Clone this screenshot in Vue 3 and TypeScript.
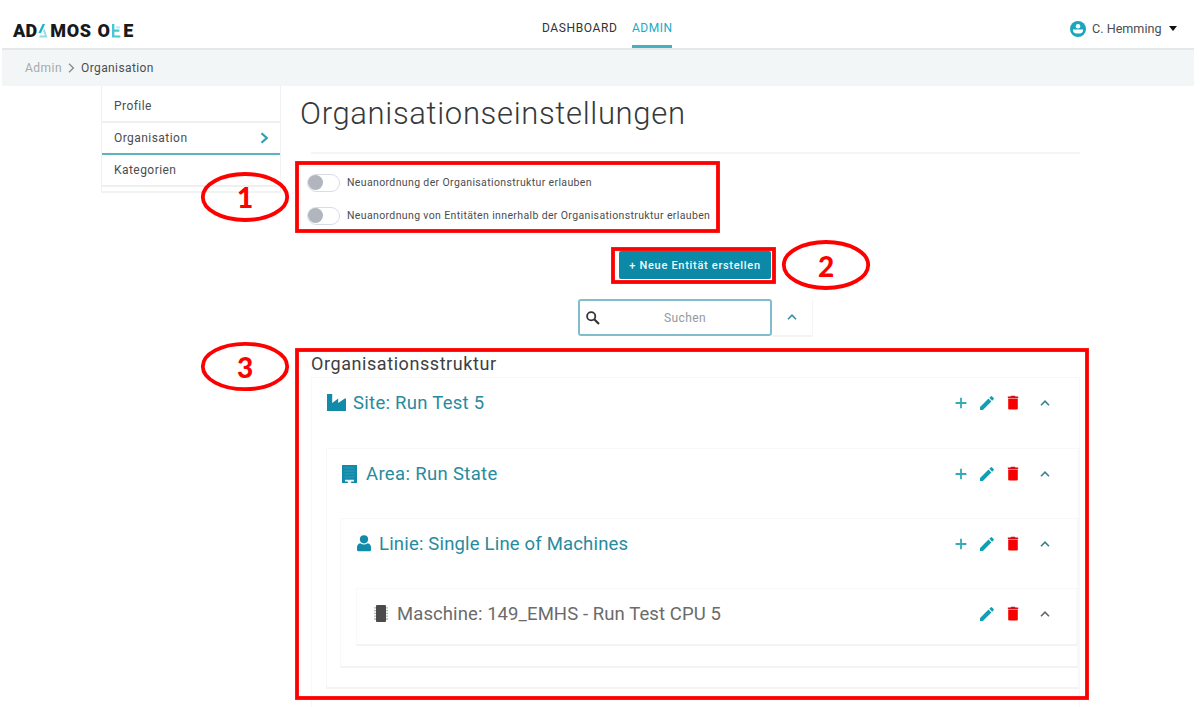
<script setup lang="ts">
interface Toggle { id: string; label: string }
const toggles: Toggle[] = [
  { id: 't1', label: 'Neuanordnung der Organisationstruktur erlauben' },
  { id: 't2', label: 'Neuanordnung von Entitäten innerhalb der Organisationstruktur erlauben' },
]
</script>

<template>
  <div class="page">
    <svg class="defs" width="0" height="0">
      <symbol id="plus" viewBox="0 0 12 12"><path d="M6 .8v10.4M.6 6h10.8" fill="none" stroke="#35a9b8" stroke-width="1.8" /></symbol>
      <symbol id="pencil" viewBox="0 0 14 14"><path d="M0 14v-2.9L8.5 2.6l2.9 2.9L2.9 14zM9.3 1.8L10.7.4q.7-.7 1.4 0l1.5 1.5q.7.7 0 1.4l-1.4 1.4z" fill="#139fb2" /></symbol>
      <symbol id="trash" viewBox="0 0 12 15"><path d="M1.2 3.6h9.6v9.6q0 1.3-1.3 1.3h-7q-1.3 0-1.3-1.3z" fill="#f60000" /><path d="M.8 3.1V1.5h2.6L4.2.7h3.6l.8.8h2.6v1.6z" fill="#d90c18" /></symbol>
      <symbol id="up" viewBox="0 0 10 6"><path d="M1 5.2l4-4 4 4" fill="none" stroke="currentColor" stroke-width="1.6" /></symbol>
    </svg>

    <header class="top">
      <div class="logo">
        <span class="lg">AD</span>
        <svg class="lg-a" width="10" height="14" viewBox="0 0 10 14"><path d="M4.6 0H7L3 9H.4z" fill="#19b4c5" /><path d="M6.4 4.5L9.3 13.4H1l.8-1.8h5.1L5.2 7z" fill="#8fdce4" /></svg>
        <span class="lg mos">MOS</span>
        <span class="lg o">O</span>
        <svg class="lg-e" width="9" height="14" viewBox="0 0 9 14"><path d="M0 0h2.4v5.6h5v2.2h-5v3.6h6v2.2H0z" fill="#4ac5d2" /><path d="M4 2.4h4v2H4z" fill="#b5e9ee" /></svg>
        <span class="lg">E</span>
      </div>
      <nav class="nav">
        <a class="dash">DASHBOARD</a>
        <a class="adm">ADMIN</a>
      </nav>
      <div class="user">
        <svg width="16" height="16" viewBox="0 0 16 16"><circle cx="8" cy="8" r="8" fill="#1aa7bd" /><circle cx="8" cy="5.2" r="2.3" fill="#fff" /><path d="M3 8.6h10v1.2q0 2.8-5 2.8t-5-2.8z" fill="#fff" /></svg>
        <span>C. Hemming</span>
        <i class="caret"></i>
      </div>
    </header>

    <div class="crumbs">
      <span class="c1">Admin</span>
      <svg width="7" height="10" viewBox="0 0 7 10"><path d="M1 .8L5.4 5 1 9.2" fill="none" stroke="#8a8e90" stroke-width="1.4" /></svg>
      <span class="c2">Organisation</span>
    </div>

    <div class="body">
      <aside class="side">
        <div class="item profile">Profile</div>
        <div class="item active"><span>Organisation</span>
          <svg width="9" height="12" viewBox="0 0 9 12"><path d="M1.5 1.2L6.8 6l-5.3 4.8" fill="none" stroke="#2d9fb1" stroke-width="2.2" /></svg>
        </div>
        <div class="item kat">Kategorien</div>
      </aside>

      <main class="main">
        <h1>Organisationseinstellungen</h1>
        <div class="rule"></div>
        <div class="toggles">
          <div v-for="t in toggles" :key="t.id" class="toggle">
            <i class="sw"><b></b></i><span>{{ t.label }}</span>
          </div>
        </div>
        <button class="create">+ Neue Entität erstellen</button>
        <div class="search">
          <div class="field">
            <svg width="14" height="14" viewBox="0 0 14 14"><circle cx="5.2" cy="5.2" r="4.1" fill="none" stroke="#303538" stroke-width="1.8" /><path d="M8.2 8.2l4.8 4.8" stroke="#303538" stroke-width="2.2" /></svg>
            <span>Suchen</span>
          </div>
          <div class="fold"><svg width="10" height="6"><use href="#up" /></svg></div>
        </div>

        <h2>Organisationsstruktur</h2>
        <section class="card site">
          <div class="row">
            <svg class="ic" width="19" height="17" viewBox="0 0 19 17"><path d="M0 0h5.2v9l6-4.6V9l6.6-4.6H19V17H0z" fill="#128bab" /></svg>
            <span class="name">Site: Run Test 5</span>
            <div class="acts"><svg class="plus"><use href="#plus" /></svg><svg class="pen"><use href="#pencil" /></svg><svg class="bin"><use href="#trash" /></svg><svg class="chev"><use href="#up" /></svg></div>
          </div>
          <section class="card area">
            <div class="row">
              <svg class="ic" width="15" height="18" viewBox="0 0 15 18"><path d="M0 0h15v18H0z" fill="#128bab" /><path d="M2.5 3h10M2.5 6h10M2.5 9h10M2.5 12h10" stroke="#2f9ab5" stroke-width="1" /><path d="M3 14.7h9v1.7H9.5L8.8 18H6.2l-.7-1.6H3z" fill="#e9f7fa" /></svg>
              <span class="name">Area: Run State</span>
              <div class="acts"><svg class="plus"><use href="#plus" /></svg><svg class="pen"><use href="#pencil" /></svg><svg class="bin"><use href="#trash" /></svg><svg class="chev"><use href="#up" /></svg></div>
            </div>
            <section class="card line">
              <div class="row">
                <svg class="ic" width="14" height="17" viewBox="0 0 14 17"><circle cx="7" cy="4.3" r="4.1" fill="#128bab" /><path d="M3.2 8.2Q7 11 10.8 8.2 14 9 14 12.5v2.3Q14 16.3 12.5 16.3h-11Q0 16.3 0 14.8v-2.3Q0 9 3.2 8.2z" fill="#128bab" /></svg>
                <span class="name">Linie: Single Line of Machines</span>
                <div class="acts"><svg class="plus"><use href="#plus" /></svg><svg class="pen"><use href="#pencil" /></svg><svg class="bin"><use href="#trash" /></svg><svg class="chev"><use href="#up" /></svg></div>
              </div>
              <section class="card machine">
                <div class="row">
                  <svg class="ic" width="14" height="17" viewBox="0 0 14 17"><path d="M0 2.8h14M0 5.6h14M0 8.4h14M0 11.2h14M0 14h14" stroke="#b5b5b5" stroke-width="1.3" /><rect x="2" width="10" height="17" rx="1" fill="#4b4b4b" /></svg>
                  <span class="name">Maschine: 149_EMHS - Run Test CPU 5</span>
                  <div class="acts"><svg class="pen"><use href="#pencil" /></svg><svg class="bin"><use href="#trash" /></svg><svg class="chev"><use href="#up" /></svg></div>
                </div>
              </section>
            </section>
          </section>
        </section>
      </main>
    </div>

    <svg class="marks" width="1200" height="707">
      <g fill="none" stroke="#fe0000" stroke-width="3.8">
        <rect x="297" y="163" width="421" height="68" />
        <rect x="613" y="249" width="161" height="33" />
        <rect x="297" y="350" width="790" height="348" />
        <ellipse cx="245" cy="197" rx="42.2" ry="23" />
        <ellipse cx="826" cy="265" rx="42.2" ry="23" />
        <ellipse cx="245" cy="366.5" rx="42.2" ry="22.7" />
      </g>
      <g class="num" text-anchor="middle">
        <text x="245" y="208">1</text>
        <text x="826" y="276.5">2</text>
        <text x="245" y="377.5">3</text>
      </g>
    </svg>
  </div>
</template>

<style>
body { margin: 0; background: #fff; }
</style>

<style scoped>
.page { position: relative; width: 1200px; height: 707px; overflow: hidden; background: #fff; font-family: Roboto, "Liberation Sans", sans-serif; color: #4a4d4f; box-sizing: border-box; }
.page * { box-sizing: border-box; }
.defs { display: block; }
.page svg { flex: none; }
.top { display: flex; height: 50px; width: 1192px; margin-left: 2px; border-bottom: 2px solid #e4e8e9; padding-top: 8px; }
.logo { display: flex; align-items: center; width: 540px; padding-left: 11px; height: 45px; }
.lg { font: 900 18px/20px Roboto, sans-serif; color: #17191b; letter-spacing: .2px; }
.lg-a { margin: 0 2px 0 1px; }
.mos { letter-spacing: .6px; }
.o { margin-left: 6px; }
.lg-e { margin: 0 2px 0 2px; }
.nav { display: flex; gap: 15px; font-size: 12px; line-height: 14px; font-weight: 400; }
.nav a { height: 40px; padding-top: 13px; white-space: nowrap; }
.dash { width: 75px; color: #303335; letter-spacing: .6px; }
.adm { width: 40px; color: #22a9c4; border-bottom: 3px solid #48afbd; letter-spacing: .5px; }
.user { display: flex; align-items: center; height: 41px; margin-left: auto; margin-right: 17px; font-size: 12.6px; }
.user span { margin: 0 7px 0 6px; width: 70px; white-space: nowrap; }
.caret { border: 4px solid transparent; border-top: 5px solid #111; border-bottom: 0; }
.crumbs { display: flex; align-items: center; height: 36px; width: 1192px; margin-left: 2px; padding-left: 23px; background: #f3f6f7; font-size: 12px; white-space: nowrap; }
.c1 { width: 43px; color: #a5aaad; letter-spacing: .5px; }
.c2 { margin-left: 6px; letter-spacing: .4px; }
.body { display: flex; }
.side { width: 180px; height: 107px; margin-left: 101px; border: 1px solid #f0f1f2; border-top: 0; border-bottom: 2px solid #f1f2f2; font-size: 12px; letter-spacing: .45px; }
.item { display: flex; align-items: center; padding: 0 11px 0 12px; height: 32px; border-bottom: 2px solid #eeefef; }
.profile { height: 37px; padding-top: 4px; }
.active { border-bottom-color: #5fb3bd; justify-content: space-between; }
.main { display: flex; flex-direction: column; width: 785px; margin-left: 14px; }
h1 { margin: 5px 0 0 5px; font-size: 31px; font-weight: 300; line-height: 46px; color: #36393b; white-space: nowrap; letter-spacing: .66px; }
h2 { margin: 15px 0 0 16px; font-size: 18px; font-weight: 400; line-height: 24px; color: #3d4042; white-space: nowrap; letter-spacing: .57px; }
.rule { height: 2px; margin: 15px 0 0 16px; background: #f5f5f6; }
.toggles { padding: 12px 0 0 12px; }
.toggle { display: flex; align-items: center; height: 33px; font-size: 10.5px; letter-spacing: .365px; white-space: nowrap; }
.sw { width: 33px; height: 18px; border: 1.5px solid #d8dce5; border-radius: 9px; margin-right: 7px; }
.sw b { display: block; width: 15px; height: 15px; border-radius: 50%; background: #b0b5be; }
.create { width: 152px; height: 28px; margin: 19px 0 0 324px; padding: 0; border: 0; border-radius: 2px; background: #0b89a7; color: #eefafc; font: 500 11px/29px Roboto, sans-serif; letter-spacing: .7px; white-space: nowrap; }
.search { display: flex; margin: 20px 0 0 283px; }
.field { display: flex; align-items: center; width: 194px; height: 37px; padding-left: 6px; border: 2px solid #82bdcd; border-radius: 3px; font-size: 12px; color: #94999c; }
.field span { margin-left: 64px; letter-spacing: .4px; }
.fold { display: flex; align-items: center; justify-content: center; width: 41px; height: 38px; border-right: 1px solid #f5f5f5; border-bottom: 2px solid #f4f4f4; color: #398da2; }
.card { border: 1px solid #f8f8f8; }
.row { display: flex; align-items: center; height: 49px; font-size: 18.5px; color: #278ba0; white-space: nowrap; }
.site { margin: 1px 0 0 16px; height: 333px; padding: 0 0 0 15px; }
.area { margin: 21px 0 0 -1px; height: 241px; padding-left: 15px; border-bottom: 2px solid #f3f3f3; }
.line { margin: 20px 0 0 -2px; height: 150px; padding-left: 16px; border-bottom: 2px solid #f3f3f3; }
.machine { margin: 20px 0 0 -1px; height: 58px; padding-left: 17px; border-bottom: 2px solid #f3f3f3; }
.site > .row > .name { margin-left: 7px; letter-spacing: .28px; }
.area > .row > .name { margin-left: 9px; letter-spacing: .34px; }
.line > .row > .name { margin-left: 8px; letter-spacing: .18px; }
.machine > .row > .name { margin-left: 9px; color: #6b6b6b; letter-spacing: .09px; }
.acts { display: flex; align-items: center; margin-left: auto; margin-right: 29px; color: #39818b; }
.area > .row > .acts { margin-right: 28px; }
.line > .row > .acts { margin-right: 27px; }
.machine > .row > .acts { margin-right: 26px; color: #666; }
.plus { width: 12px; height: 12px; margin-right: 13px; }
.pen { width: 14px; height: 14px; margin-right: 13px; }
.bin { width: 12px; height: 15px; margin-right: 21px; }
.chev { width: 10px; height: 6px; }
.marks { position: absolute; left: 0; top: 0; }
.num { font: 900 28px Lato, sans-serif; fill: #fe0000; }
</style>
